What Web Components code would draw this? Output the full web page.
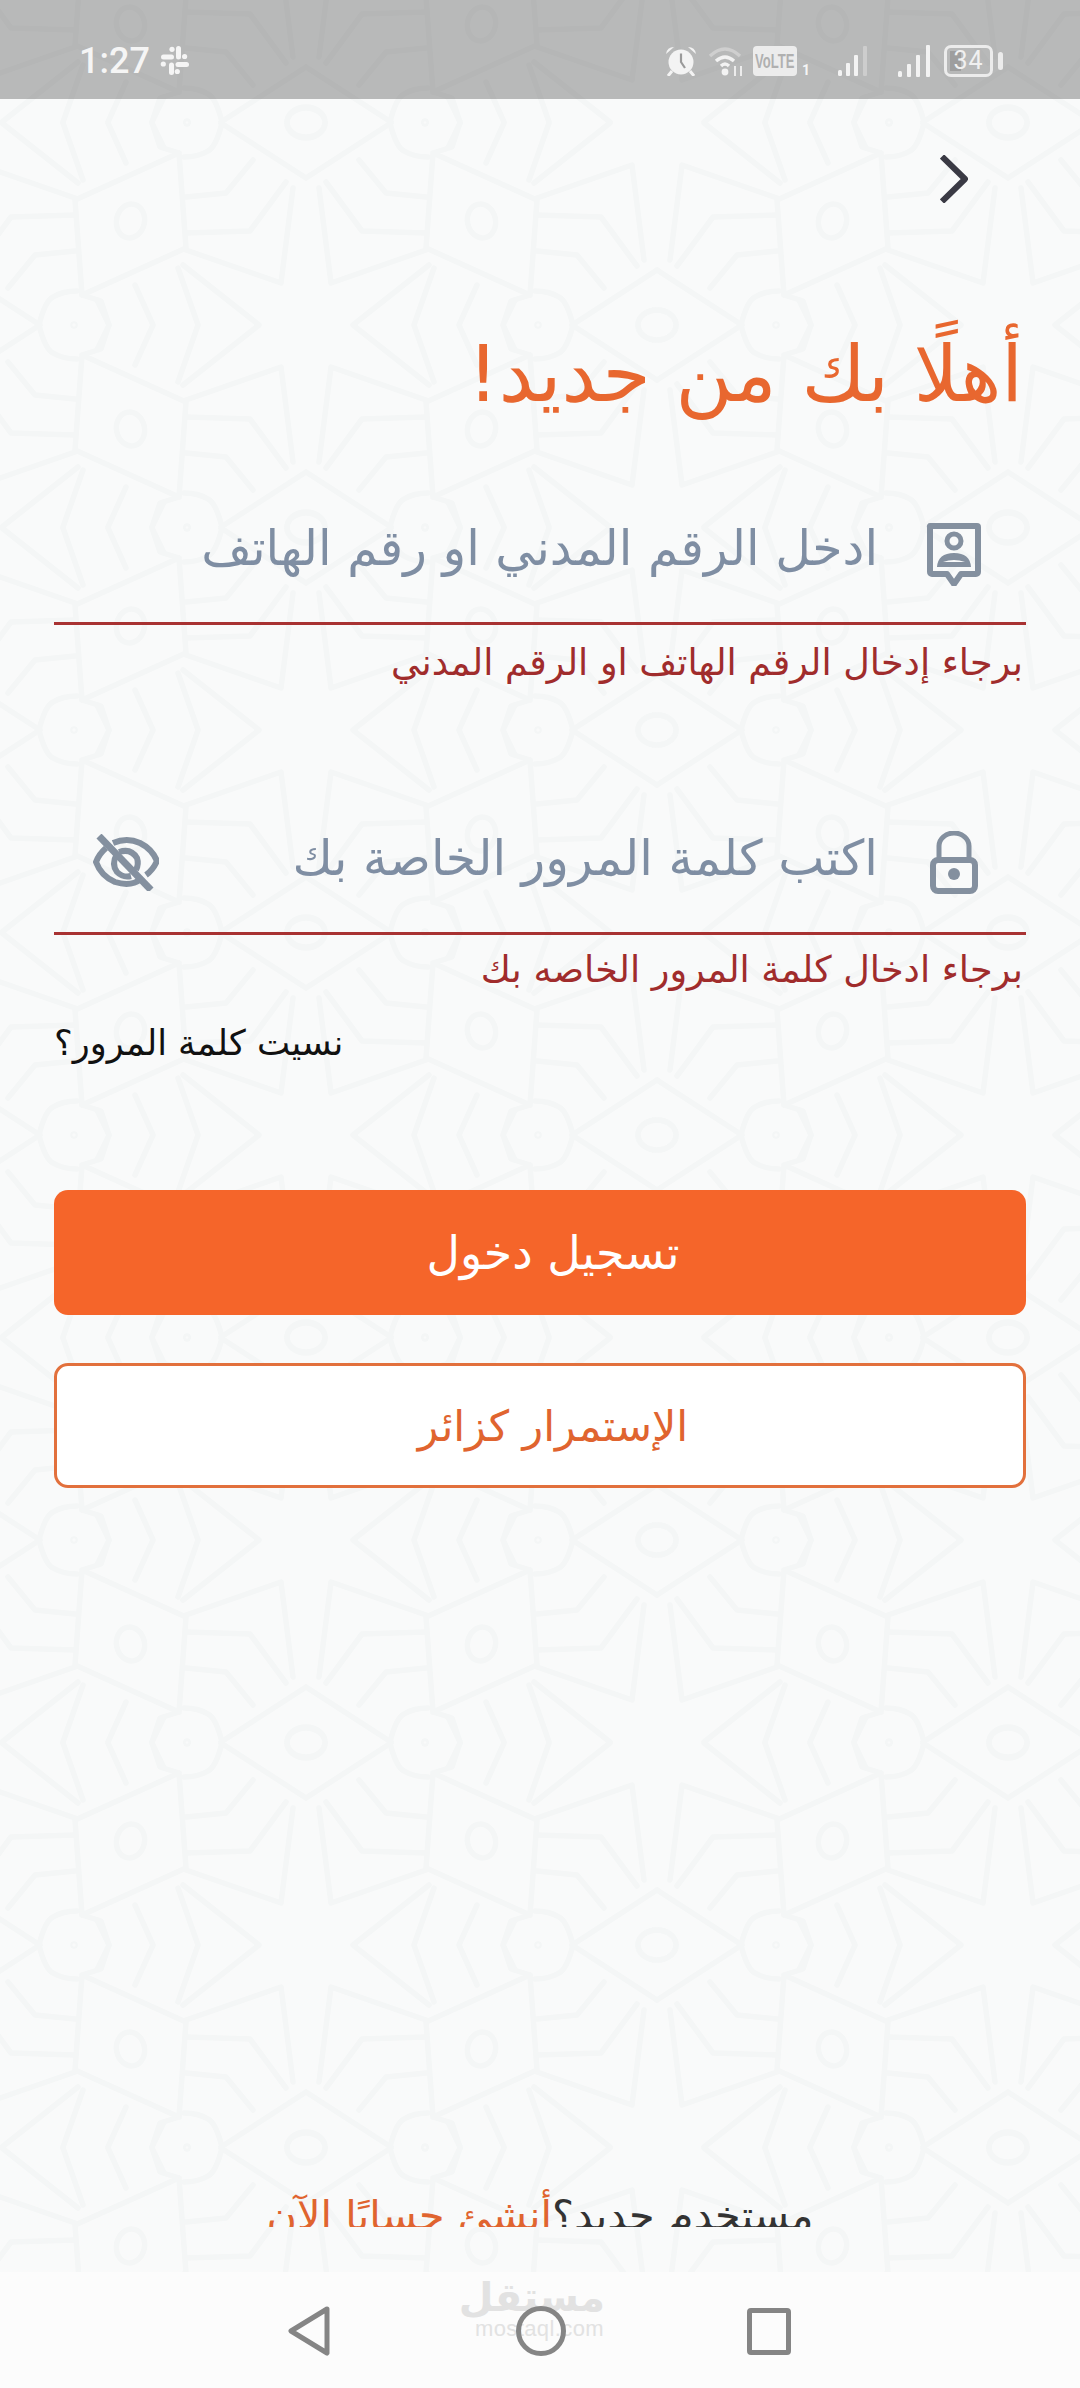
<!DOCTYPE html>
<html lang="ar">
<head>
<meta charset="utf-8">
<title>تسجيل الدخول</title>
<style>
  html, body { margin: 0; padding: 0; width: 1080px; height: 2388px; overflow: hidden; background: #f9fafa; }
  body { font-family: "DejaVu Sans", sans-serif; }
  svg { display: block; }
</style>
</head>
<body>
<template id="tpl-pattern">
  <style>
    :host { position: absolute; inset: 0; display: block; z-index: 0; }
    svg { display: block; width: 100%; height: 100%; }
  </style>
  <svg xmlns="http://www.w3.org/2000/svg" width="1080" height="2388">
    <defs>
      <g id="q" fill="none" stroke="#f4f6f6" stroke-width="5.5" stroke-linejoin="round" stroke-linecap="round">
        <g id="half">
          <path d="M0 147 L85 202"/>
          <ellipse cx="0" cy="202" rx="19" ry="15"/>
          <path d="M84 202 Q90 178 98 174 Q108 168 122 168"/>
          <path d="M154 202 L146 178 L127 172"/>
          <path d="M120 92 L56 94 L20 143"/>
          <path d="M120 128 L80 132 L53 165"/>
          <path d="M120 75 L25 42 L13 137"/>
          <path d="M123 60 L47 0"/>
          <path d="M128 57 L108 0"/>
          <path d="M171 40 L153 0"/>
          <path d="M209 25 L197 0"/>
          <circle cx="119" cy="202" r="1" />
        </g>
        <use href="#half" transform="rotate(180 175.5 101)"/>
        <path d="M120 77 L224 30 L231 125 L127 172 Z"/>
        <ellipse cx="175.5" cy="104" rx="14" ry="17" transform="rotate(12 175.5 104)"/>
      </g>
      <pattern id="tile" patternUnits="userSpaceOnUse" width="702" height="405" patternTransform="translate(306 325)">
        <use href="#q"/>
        <use href="#q" transform="translate(702 0) scale(-1 1)"/>
        <use href="#q" transform="translate(0 405) scale(1 -1)"/>
        <use href="#q" transform="translate(702 405) scale(-1 -1)"/>
      </pattern>
    </defs>
    <rect width="1080" height="2388" fill="#f9fafa"/>
    <rect width="1080" height="2388" fill="url(#tile)"/>
  </svg>
</template>

<template id="tpl-screen">
  <style>
    :host { position: relative; display: flex; flex-direction: column; width: 1080px; height: 2388px; overflow: hidden; color: #111; }
    .main { position: relative; z-index: 1; flex: 1; min-height: 0; display: flex; flex-direction: column; padding: 0 54px; }
    .bars { position: relative; z-index: 1; display: block; }
  </style>
  <pattern-bg></pattern-bg>
  <div class="bars"><slot name="status"></slot></div>
  <div class="main"><slot></slot></div>
  <div class="bars"><slot name="nav"></slot></div>
</template>

<template id="tpl-status">
  <style>
    :host { display: flex; align-items: center; justify-content: space-between; height: 99px; background: rgba(0,0,0,.26); padding: 0 77px 0 79px; box-sizing: border-box; color: #f5f5f5; direction: ltr; font-family: Roboto, sans-serif; }
    .side { display: flex; align-items: center; height: 32px; margin-top: 22px; }
    .time { font-size: 36px; font-weight: 500; line-height: 32px; width: 81px; }
    .volte { box-sizing: border-box; width: 44px; height: 30px; background: #ececec; color: #b0b0b0; border-radius: 4px; overflow: hidden; display: flex; justify-content: center; }
    .volte span { display: inline-block; font: 700 21px/30px "Liberation Sans", sans-serif; transform: scaleX(.62); transform-origin: center; white-space: nowrap; }
    .sim { font: 700 14px/14px Roboto, sans-serif; align-self: flex-end; margin: 0 30px 0 5px; width: 6px; }
    .batt { box-sizing: border-box; width: 49px; height: 32px; border: 3px solid #ececec; border-radius: 7px; padding: 3px; display: flex; }
    .fill { display: flex; align-items: center; justify-content: center; width: 100%; font: 400 25px/20px Roboto, sans-serif; letter-spacing: 1px; background: linear-gradient(90deg, #9e9e9e 0 30%, transparent 30%); color: #f0f0f0; }
    .nub { width: 5px; height: 18px; border-radius: 3px; background: #ececec; margin-left: 5px; }
    svg { display: block; flex: none; }
  </style>
  <div class="side">
    <span class="time">1:27</span>
    <svg width="29" height="29" viewBox="0 0 29 29" fill="#f5f5f5">
      <rect x="1" y="8.5" width="13" height="5" rx="2.5"/><circle cx="12" cy="3.3" r="2.6"/>
      <rect x="16" y="0" width="5" height="13.5" rx="2.5"/><circle cx="24.6" cy="10.5" r="2.6"/>
      <rect x="15.5" y="16" width="13.5" height="5" rx="2.5"/><circle cx="17.3" cy="25.5" r="2.6"/>
      <rect x="9" y="16.5" width="5" height="12.5" rx="2.5"/><circle cx="3.3" cy="18" r="2.6"/>
    </svg>
  </div>
  <div class="side right">
    <svg width="32" height="30" viewBox="0 0 32 30" style="margin-right:11px">
      <circle cx="16" cy="16" r="12.5" fill="#f3f3f3"/>
      <path d="M16 7.5 V16 L20 22" fill="none" stroke="#9a9a9a" stroke-width="2.2"/>
      <path d="M1 8 Q2 1 9 1 Z M31 8 Q30 1 23 1 Z" fill="#f3f3f3"/>
      <path d="M7 25 L3 30 M25 25 L29 30" stroke="#f3f3f3" stroke-width="3"/>
    </svg>
    <svg width="37" height="30" viewBox="0 0 37 30" fill="none" style="margin-right:8px">
      <path d="M2 10 Q17 -4 32 10" stroke="#cfcfcf" stroke-width="3.4"/>
      <path d="M8 15 Q17 7 26 15" stroke="#f3f3f3" stroke-width="3.4"/>
      <path d="M13 20 Q17 16 21 20" stroke="#f3f3f3" stroke-width="3.4"/>
      <circle cx="17" cy="26" r="3.4" fill="#f3f3f3"/>
      <path d="M27 20 V30 M33 20 V30" stroke="#ececec" stroke-width="2"/>
    </svg>
    <span class="volte"><span>VoLTE</span></span>
    <span class="sim">1</span>
    <svg width="29" height="30" viewBox="0 0 29 30" style="margin-right:31px">
      <rect x="0" y="24" width="4" height="6" rx="1.5" fill="#f3f3f3"/><rect x="8" y="17" width="4" height="13" rx="1" fill="#f3f3f3"/><rect x="16" y="9" width="4" height="21" rx="1" fill="#f3f3f3"/><rect x="25" y="0" width="4" height="30" rx="1" fill="#cdcdcd"/>
    </svg>
    <svg width="33" height="32" viewBox="0 0 33 32" style="margin-right:13px">
      <rect x="0" y="26" width="4" height="6" rx="1.5" fill="#f3f3f3"/><rect x="9" y="19" width="4" height="13" rx="1" fill="#f3f3f3"/><rect x="18" y="10" width="4" height="22" rx="1" fill="#f3f3f3"/><rect x="28" y="0" width="4" height="32" rx="1" fill="#f3f3f3"/>
    </svg>
    <span class="batt"><span class="fill">34</span></span>
    <span class="nub"></span>
  </div>
</template>

<template id="tpl-back">
  <style>
    :host { display: flex; justify-content: flex-end; padding: 56px 58px 0 0; }
  </style>
  <svg width="28" height="48" viewBox="0 0 28 48" fill="none" stroke="#3a3a44" stroke-width="6" style="display:block"><path d="M2 1.5 L25 24 L2 46.5" stroke-linejoin="round"/></svg>
</template>

<template id="tpl-title">
  <style>
    :host { display: block; height: 130px; margin-top: 97px; direction: rtl; text-align: right; color: #e8672f; font-size: 78px; line-height: 148px; white-space: nowrap; padding-right: 3px; }
  </style>
  <slot></slot>
</template>

<template id="tpl-field">
  <style>
    :host { display: flex; direction: rtl; align-items: center; box-sizing: border-box; height: 143px; border-bottom: 3px solid #a83232; padding: 0 41px 0 39px; color: #7f8ea3; font-size: 49px; white-space: nowrap; }
    .icon { flex: none; width: 62px; display: flex; justify-content: center; }
    .text { flex: 1; margin-right: 45px; margin-top: -8px; }
  </style>
  <span class="icon"><slot name="icon"></slot></span>
  <span class="text"><slot></slot></span>
  <slot name="trailing"></slot>
</template>

<template id="tpl-error">
  <style>
    :host { display: block; box-sizing: border-box; height: 60px; margin-top: 5px; line-height: 60px; direction: rtl; color: #a02c2c; font-size: 36.6px; white-space: nowrap; padding-right: 3px; }
  </style>
  <slot></slot>
</template>

<template id="tpl-forgot">
  <style>
    :host { display: block; direction: rtl; text-align: left; color: #111; font-size: 35.2px; line-height: 56px; height: 60px; margin-top: 15px; white-space: nowrap; }
    span { display: inline-block; }
  </style>
  <span><slot></slot></span>
</template>

<template id="tpl-button">
  <style>
    :host { display: flex; align-items: center; justify-content: center; box-sizing: border-box; height: 125px; padding-left: 26px; border-radius: 14px; font-size: 46px; direction: rtl; white-space: nowrap; background: #f5652a; color: #fff; }
    :host([outline]) { background: #fff; color: #e0642f; border: 3px solid #e2703c; font-size: 42.7px; }
  </style>
  <slot></slot>
</template>

<template id="tpl-signup">
  <style>
    :host { display: block; margin-top: auto; margin-bottom: 45px; height: 42px; overflow: hidden; direction: rtl; text-align: center; font-size: 41.4px; line-height: 62px; color: #333; white-space: nowrap; }
    ::slotted(a) { color: #e0642f; text-decoration: none; }
  </style>
  <slot></slot>
</template>

<template id="tpl-nav">
  <style>
    :host { position: relative; display: flex; align-items: center; justify-content: center; height: 116px; background: #fcfcfc; direction: ltr; }
    .icons { display: flex; align-items: center; margin-top: 2px; margin-right: 2px; }
    .mark { position: absolute; left: 474px; top: 2px; width: 131px; text-align: center; color: #e2e2e2; font-family: "DejaVu Sans", sans-serif; }
    .ar { font-size: 40px; font-weight: 700; line-height: 46px; direction: rtl; }
    .en { font: 400 22px/18px "Liberation Sans", sans-serif; letter-spacing: .4px; }
    svg { display: block; position: relative; }
  </style>
  <div class="mark"><div class="ar">مستقل</div><div class="en">mostaql.com</div></div>
  <div class="icons">
    <svg width="42" height="50" viewBox="0 0 42 50" fill="none" stroke="#858585" stroke-width="5" stroke-linejoin="round" style="margin-right:186px"><path d="M39 3 L3 25 L39 47 Z" /></svg>
    <svg width="50" height="50" viewBox="0 0 50 50" fill="none" stroke="#858585" stroke-width="5" style="margin-right:181px"><circle cx="25" cy="25" r="22.5"/></svg>
    <svg width="44" height="47" viewBox="0 0 44 47" fill="none" stroke="#858585" stroke-width="5" stroke-linejoin="round"><rect x="2.5" y="2.5" width="39" height="42" rx="1.5"/></svg>
  </div>
</template>

<app-screen>
  <status-bar slot="status"></status-bar>
  <back-row></back-row>
  <page-title>أهلًا بك من جديد!</page-title>
  <login-field style="margin-top:52px">
    <svg slot="icon" width="62" height="68" viewBox="43 18 62 68" fill="none" stroke="#84909f">
      <path d="M50 26 H97 A1 1 0 0 1 98 27 V72 A2 2 0 0 1 96 74 H81 L74 84 L67 74 H52 A2 2 0 0 1 50 72 V27 A1 1 0 0 1 50 26 Z" stroke-width="6" stroke-linejoin="round"/>
      <circle cx="74" cy="41" r="7" stroke-width="5"/>
      <path d="M57 67 Q58 53 74 53 Q90 53 91 67 Z M63 62 Q74 58 85 62 Z" fill="#84909f" fill-rule="evenodd" stroke="none"/>
    </svg>
    ادخل الرقم المدني او رقم الهاتف
  </login-field>
  <field-error style="line-height:66px">برجاء إدخال الرقم الهاتف او الرقم المدني</field-error>
  <login-field style="margin-top:102px">
    <svg slot="icon" width="48" height="63" viewBox="0 0 48 63" fill="none" stroke="#84909f">
      <path d="M9 27 V15 A15 13 0 0 1 39 15 V27" stroke-width="5"/>
      <rect x="3" y="29" width="42" height="31" rx="5" stroke-width="6"/>
      <circle cx="24" cy="43" r="6" fill="#84909f" stroke="none"/>
    </svg>
    اكتب كلمة المرور الخاصة بك
    <svg slot="trailing" width="66" height="57" viewBox="0 0 66 57" fill="none" stroke="#84909f" stroke-width="6">
      <path d="M20 9 Q34 3 47 9 Q59 15 64 27 Q60 36 53 41"/>
      <path d="M13 14 Q6 20 3 28 Q8 42 22 48 Q38 53 48 45"/>
      <path d="M26 18 Q38 14 44 24 Q46 30 43 36"/>
      <path d="M24 20 Q18 30 24 38 Q30 44 38 42"/>
      <path d="M6 2 L58 56" stroke-width="7"/>
    </svg>
  </login-field>
  <field-error>برجاء ادخال كلمة المرور الخاصه بك</field-error>
  <forgot-link>نسيت كلمة المرور؟</forgot-link>
  <app-button style="margin-top:115px">تسجيل دخول</app-button>
  <app-button outline style="margin-top:48px">الإستمرار كزائر</app-button>
  <signup-line>مستخدم جديد؟<a>أنشئ حسابًا الآن</a></signup-line>
  <nav-bar slot="nav"></nav-bar>
</app-screen>

<script>
  const reg = (name, tpl) => customElements.define(name, class extends HTMLElement {
    constructor() {
      super();
      this.attachShadow({ mode: 'open' }).appendChild(document.getElementById(tpl).content.cloneNode(true));
    }
  });
  reg('pattern-bg', 'tpl-pattern');
  reg('app-screen', 'tpl-screen');
  reg('status-bar', 'tpl-status');
  reg('back-row', 'tpl-back');
  reg('page-title', 'tpl-title');
  reg('login-field', 'tpl-field');
  reg('field-error', 'tpl-error');
  reg('forgot-link', 'tpl-forgot');
  reg('app-button', 'tpl-button');
  reg('signup-line', 'tpl-signup');
  reg('nav-bar', 'tpl-nav');
</script>
</body>
</html>
